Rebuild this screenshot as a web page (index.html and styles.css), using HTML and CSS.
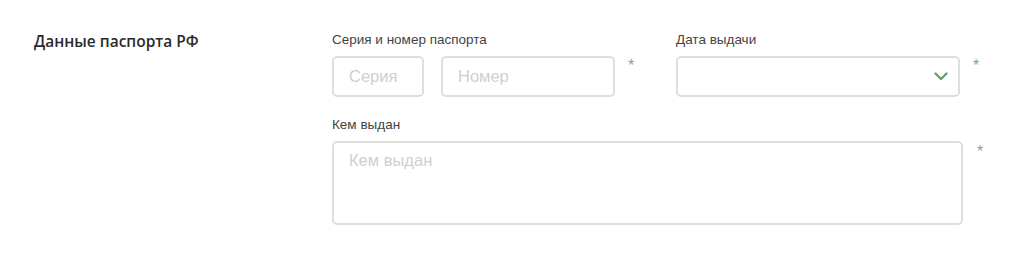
FILE: index.html
```html
<!DOCTYPE html>
<html lang="ru">
<head>
  <meta charset="UTF-8">
  <meta name="viewport" content="width=device-width, initial-scale=1.0">
  <title>Данные паспорта РФ</title>
  <link rel="stylesheet" href="styles.css">
</head>
<body>
  <div class="section">
    <h2>Данные паспорта РФ</h2>
    <form class="passport" id="passportForm">
      <div class="row">
        <div class="field field-number">
          <label for="series">Серия и номер паспорта</label>
          <div class="control">
            <input type="text" id="series" class="input input-series" placeholder="Серия">
            <input type="text" id="number" class="input input-number" placeholder="Номер">
            <span class="req">*</span>
          </div>
        </div>
        <div class="field">
          <label for="issueDate">Дата выдачи</label>
          <div class="control">
            <div class="select">
              <svg class="chevron" width="14" height="9" viewBox="0 0 14 9">
                <path d="M1.5 1.5 L7 7 L12.5 1.5" fill="none" stroke="#5c9e6c" stroke-width="2.2" stroke-linecap="round" stroke-linejoin="round"/>
              </svg>
            </div>
            <span class="req">*</span>
          </div>
        </div>
      </div>
      <div class="field">
        <label for="issuedBy">Кем выдан</label>
        <div class="control">
          <textarea id="issuedBy" class="input input-area" placeholder="Кем выдан"></textarea>
          <span class="req req-area">*</span>
        </div>
      </div>
    </form>
  </div>
</body>
</html>
```

FILE: styles.css
```css
body {
  margin: 0;
  padding: 0;
  background-color: #fff;
  font-family: "Liberation Sans", Arial, sans-serif;
  color: #333;
}
.section {
  display: grid;
  grid-template-columns: 298px 1fr;
  padding: 31px 0 0 34px;
}
h2 {
  margin: 0;
  font-family: "Open Sans", "Noto Sans", sans-serif;
  font-size: 15.5px;
  font-weight: 600;
  line-height: 20px;
  color: #2b2b2b;
}
.passport {
  display: flex;
  flex-direction: column;
  gap: 20px;
  padding-top: 1px;
}
.row {
  display: flex;
}
.field-number {
  width: 344px;
}
label {
  display: block;
  font-size: 13.5px;
  line-height: 16px;
  color: #444;
  margin-bottom: 8px;
}
.control {
  display: flex;
  align-items: flex-start;
}
.input, .select {
  box-sizing: border-box;
  height: 41px;
  border: 2px solid #dedede;
  border-radius: 5px;
  background: #fff;
  font-family: "Liberation Sans", Arial, sans-serif;
  font-size: 16.5px;
  color: #333;
  padding: 0 15px;
  outline: none;
}
.input::placeholder {
  color: #cfcfcf;
}
.input-series {
  width: 92px;
  margin-right: 17px;
}
.input-number {
  width: 174px;
}
.select {
  width: 284px;
  display: flex;
  align-items: center;
  justify-content: flex-end;
  padding-right: 10px;
}
.input-area {
  width: 631px;
  height: 84px;
  padding: 8px 15px;
  resize: none;
}
.req {
  color: #7fa88a;
  font-size: 16px;
  line-height: 16px;
  margin: 2px 0 0 13px;
}
.req-area {
  margin: 3px 0 0 14px;
}
```
